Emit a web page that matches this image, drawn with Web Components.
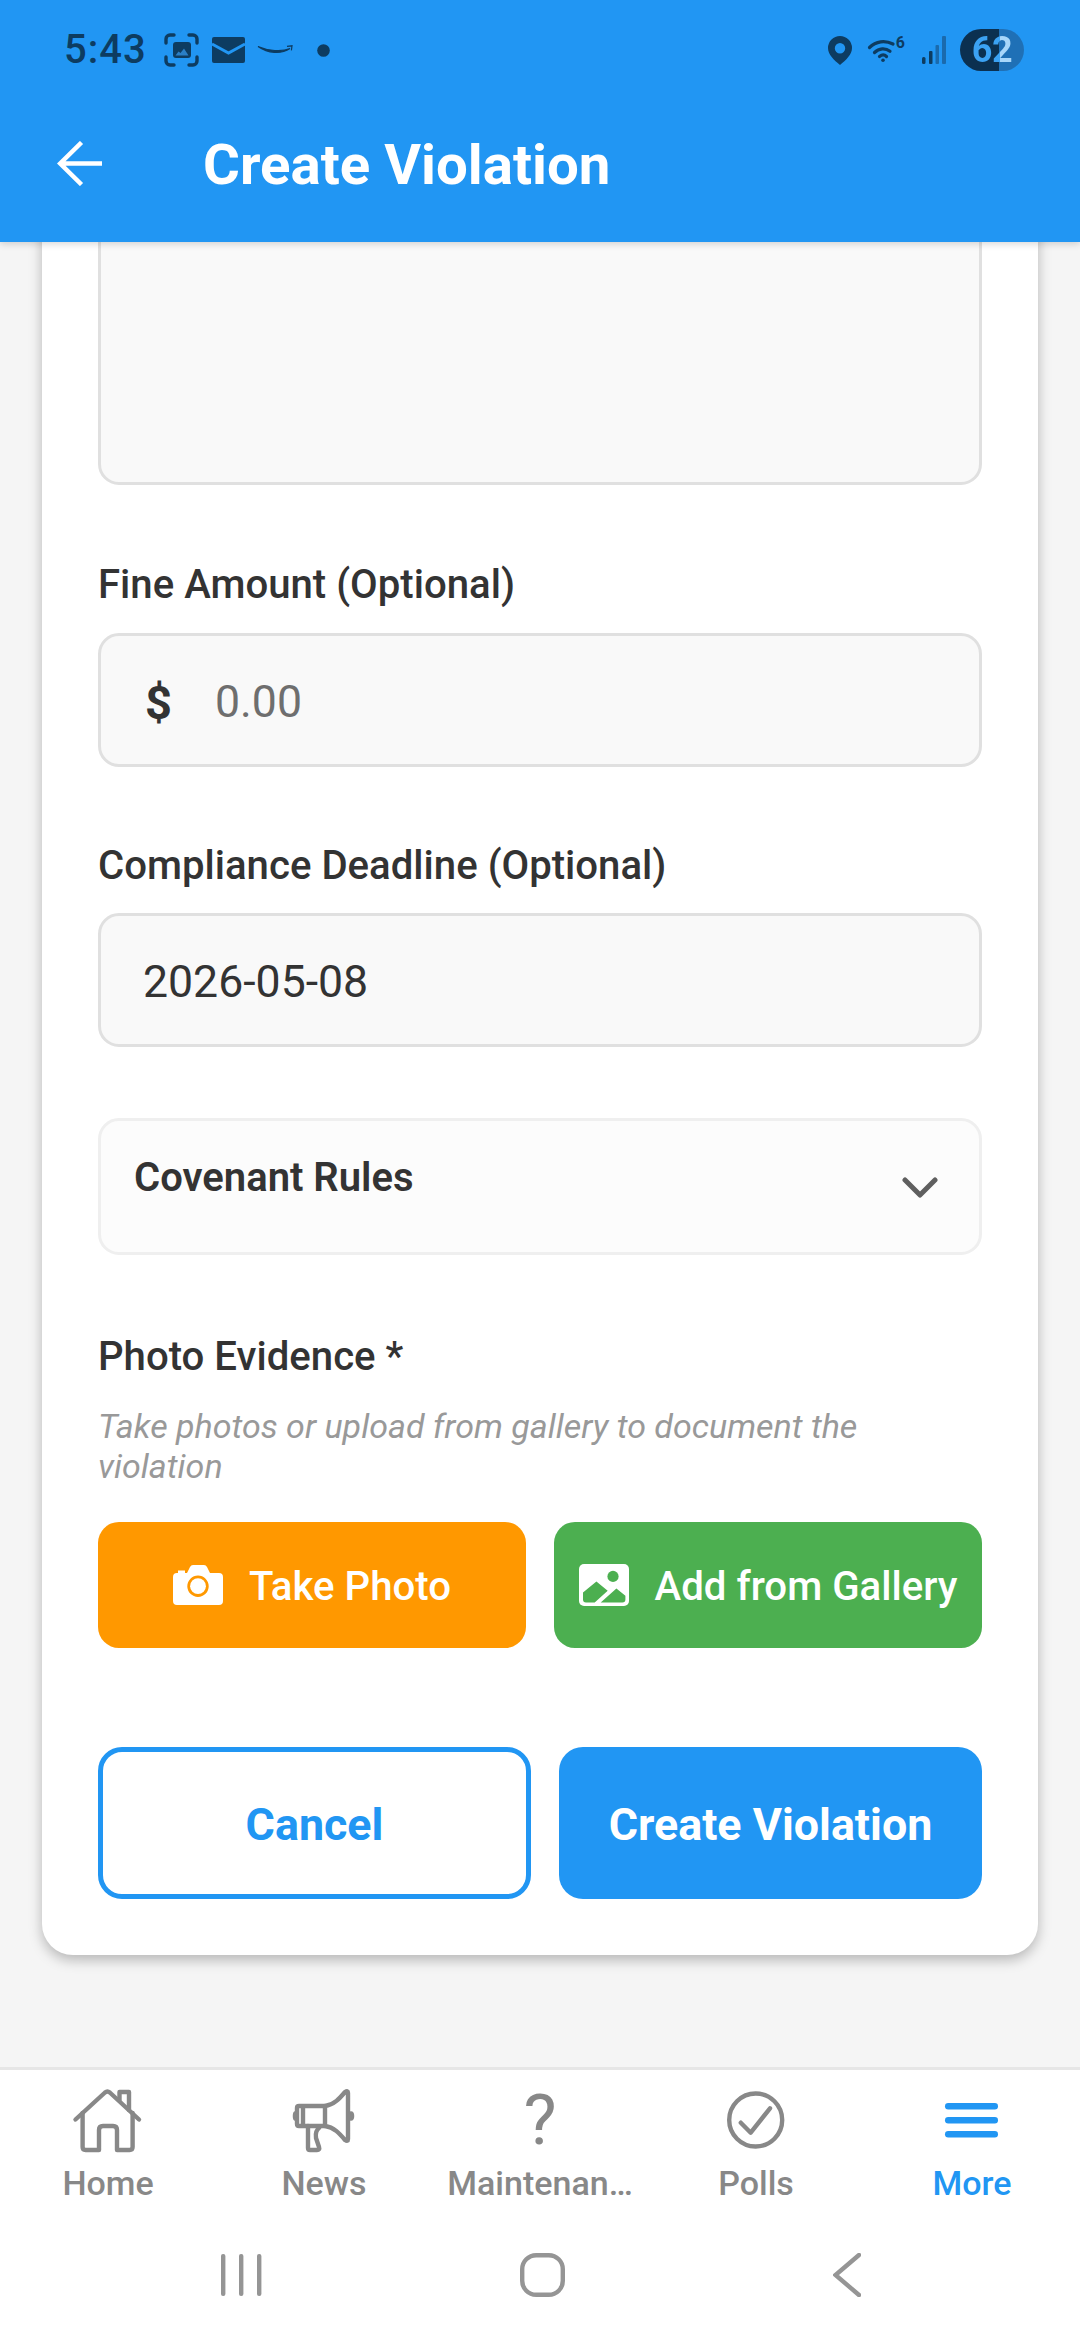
<!DOCTYPE html>
<html lang="en">
<head>
<meta charset="utf-8">
<title>Create Violation</title>
<style>
  html,body{margin:0;padding:0;background:#f5f5f5;font-family:Roboto,"Liberation Sans",sans-serif}
  body{width:1080px;height:2340px;overflow:hidden}
</style>
</head>
<body>
<app-screen>
  <app-header slot="header" title-text="Create Violation"></app-header>
  <form-card>
    <text-box kind="area"></text-box>
    <form-field label="Fine Amount (Optional)">
      <text-box prefix="$" placeholder="0.00"></text-box>
    </form-field>
    <form-field label="Compliance Deadline (Optional)">
      <text-box value="2026-05-08"></text-box>
    </form-field>
    <rules-accordion label="Covenant Rules"></rules-accordion>
    <photo-section label="Photo Evidence *" hint="Take photos or upload from gallery to document the violation">
      <action-button slot="actions" kind="camera" color="#FF9800">Take Photo</action-button>
      <action-button slot="actions" kind="gallery" color="#4CAF50">Add from Gallery</action-button>
    </photo-section>
    <form-actions>
      <submit-button variant="outline">Cancel</submit-button>
      <submit-button>Create Violation</submit-button>
    </form-actions>
  </form-card>
  <tab-bar slot="tabs">
    <tab-item label="Home" icon="home"></tab-item>
    <tab-item label="News" icon="news"></tab-item>
    <tab-item label="Maintenan…" icon="help"></tab-item>
    <tab-item label="Polls" icon="polls"></tab-item>
    <tab-item label="More" icon="more" active></tab-item>
  </tab-bar>
  <system-nav slot="tabs"></system-nav>
</app-screen>

<script>
const shadow = (el, html) => { el.attachShadow({mode:'open'}).innerHTML = html; };
const esc = s => String(s ?? '').replace(/&/g,'&amp;').replace(/</g,'&lt;').replace(/"/g,'&quot;');

customElements.define('app-screen', class extends HTMLElement {
  connectedCallback(){ shadow(this, `<style>
    :host{display:flex;flex-direction:column;width:1080px;height:2340px;overflow:hidden;background:#f5f5f5}
    .main{flex:1;min-height:0;display:flex;flex-direction:column;justify-content:flex-end;overflow:hidden;padding:0 42px 112px}
    .top{position:relative;z-index:2;flex:none}
    .tabs{flex:none;background:#fff;border-top:3px solid #e6e6e6;height:270px;display:flex;flex-direction:column}
  </style>
  <div class="top"><slot name="header"></slot></div>
  <div class="main"><slot></slot></div>
  <div class="tabs"><slot name="tabs"></slot></div>`); }
});

customElements.define('status-bar', class extends HTMLElement {
  connectedCallback(){ const c='#0d3c61'; shadow(this, `<style>
    :host{display:flex;align-items:center;height:100px;padding:0 56px 0 64px;box-sizing:border-box;color:${c}}
    .time{font:500 40px/1 Roboto,sans-serif;letter-spacing:1px;width:81px;margin-right:19px;white-space:nowrap}
    svg{display:block;flex:none;overflow:visible}
    .spacer{flex:1}
    .batt{position:relative;width:64px;height:42px;border-radius:21px;overflow:hidden;margin-left:11px;
      background:linear-gradient(90deg,#0b3050 0 39px,#1f70b6 39px);display:flex;align-items:center;justify-content:center}
    .batt span{font:700 36px/1 Roboto,sans-serif;letter-spacing:-.5px;color:transparent;
      background:linear-gradient(90deg,#3ba2f3 0 28px,#a7d6fa 28px);-webkit-background-clip:text;background-clip:text}
    .wifi{position:relative;width:37px;height:24px;margin-right:17px;flex:none}
    .wifi b{position:absolute;right:0;top:-4px;font:700 16px/18px Roboto,sans-serif;color:${c}}
  </style>
  <span class="time">5:43</span>
  <svg width="35" height="34" viewBox="0 0 35 34" fill="none" stroke="${c}" stroke-width="3.4" stroke-linecap="round" style="margin-right:13px">
    <path d="M2 10V6a4 4 0 0 1 4-4h4M25 2h4a4 4 0 0 1 4 4v4M33 24v4a4 4 0 0 1-4 4h-4M10 32H6a4 4 0 0 1-4-4v-4"/>
    <rect x="9" y="9" width="18" height="16" rx="3" fill="${c}" stroke="none"/>
    <path d="M11.500 22.500l3-4 2 1.500 3.500-4.500 4.500 7z" fill="#2a7fc6" stroke="none"/>
  </svg>
  <svg width="33" height="26" viewBox="0 0 33 26" style="margin-right:13px">
    <rect width="33" height="26" rx="2" fill="${c}"/>
    <path d="M0 7l16.500 9L33 7" fill="none" stroke="#2196F3" stroke-width="3"/>
  </svg>
  <svg width="35" height="12" viewBox="0 0 35 12" fill="none" style="margin-right:24px">
    <path d="M0 2.500C10 9.500 23 10.500 32 4.500C24 8 10 7 0 2.500z" fill="${c}" stroke="${c}" stroke-width="1.200"/>
    <path d="M29 2.400l5-.6-.6 4.600" stroke="${c}" stroke-width="1.200"/>
  </svg>
  <svg width="13" height="13" viewBox="0 0 13 13"><circle cx="6.500" cy="6.500" r="6.300" fill="${c}"/></svg>
  <span class="spacer"></span>
  <svg width="24" height="29" viewBox="0 0 24 29" style="margin-right:16px">
    <path fill-rule="evenodd" d="M12 0a12 12 0 0 1 12 12c0 6.500-6 12-12 17C6 24 0 18.500 0 12A12 12 0 0 1 12 0zm0 7a5.200 5.200 0 1 0 0 10.400A5.200 5.200 0 0 0 12 7z" fill="${c}"/>
  </svg>
  <span class="wifi">
    <svg width="37" height="24" viewBox="0 0 37 24" fill="none" stroke="${c}" stroke-width="3.200" stroke-linecap="round">
      <path d="M1.500 9.500C8 3 17 2 25 6M6.500 14.500c4.500-4.500 11-4.800 15.500-1.200M11.500 18.500c2.500-2 5-2 7 0"/>
      <circle cx="15" cy="22.300" r="1.800" fill="${c}" stroke="none"/>
    </svg>
    <b>6</b>
  </span>
  <svg width="27" height="28" viewBox="0 0 27 28">
    <rect x="0" y="21" width="3.500" height="7" rx="1.500" fill="${c}"/>
    <rect x="7" y="15" width="3.500" height="13" rx="1" fill="${c}"/>
    <rect x="13.500" y="9" width="3.500" height="19" rx="1" fill="#1a6aad"/>
    <rect x="20" y="0" width="4" height="28" rx="1" fill="#1a6aad"/>
  </svg>
  <div class="batt"><span>62</span></div>`); }
});

customElements.define('app-header', class extends HTMLElement {
  connectedCallback(){ shadow(this, `<style>
    :host{display:block;background:#2196F3;height:242px;box-shadow:0 2px 7px rgba(0,0,0,.16)}
    .bar{display:flex;align-items:center;height:130px;padding-left:57px;box-sizing:border-box}
    svg{display:block;flex:none;margin-right:101px;margin-top:-4px}
    h1{margin:0;font:700 56.400px/1 Roboto,sans-serif;color:#fff;white-space:nowrap}
  </style>
  <status-bar></status-bar>
  <div class="bar">
    <svg width="45" height="45" viewBox="0 0 45 45" fill="none" stroke="#fff" stroke-width="4.500">
      <path d="M45 22.500H3M24.500 1.500L3.200 22.500l21.300 21"/>
    </svg>
    <h1>${esc(this.getAttribute('title-text'))}</h1>
  </div>`); }
});

customElements.define('form-card', class extends HTMLElement {
  connectedCallback(){ shadow(this, `<style>
    :host{display:flex;flex-direction:column;flex:none;background:#fff;border-radius:0 0 31px 31px;padding:0 56px 56px;
      box-shadow:0 5px 13px rgba(0,0,0,.26)}
  </style><slot></slot>`); }
});

customElements.define('form-field', class extends HTMLElement {
  connectedCallback(){ shadow(this, `<style>
    :host{display:block;margin-top:72px}
    :host(:nth-child(2)){margin-top:75px}
    label{display:block;font:500 40.150px/50px Roboto,sans-serif;color:#333;padding-top:2px;margin-bottom:22px;white-space:nowrap}
    :host(:nth-child(2)) label{padding-top:0;margin-bottom:23px}
  </style><label>${esc(this.getAttribute('label'))}</label><slot></slot>`); }
});

customElements.define('text-box', class extends HTMLElement {
  connectedCallback(){
    const area = this.getAttribute('kind')==='area';
    const pre = this.getAttribute('prefix');
    const val = this.getAttribute('value');
    const ph = this.getAttribute('placeholder');
    shadow(this, `<style>
    :host{display:flex;align-items:center;box-sizing:border-box;height:${area?'320px':'134px'};background:#f9f9f9;
      border:3px solid #e0e0e0;border-radius:21px;padding:5px 42px 0}
    .pre{font:700 47px/1 Roboto,sans-serif;color:#333;width:70px;flex:none;margin-left:2px}
    .val{font:400 44.600px/1 Roboto,sans-serif;color:#333}
    .ph{font:400 44.600px/1 Roboto,sans-serif;color:#6e6e6e}
  </style>${pre?`<span class="pre">${esc(pre)}</span>`:''}${val?`<span class="val">${esc(val)}</span>`:''}${ph?`<span class="ph">${esc(ph)}</span>`:''}`);
  }
});

customElements.define('rules-accordion', class extends HTMLElement {
  connectedCallback(){ shadow(this, `<style>
    :host{display:flex;align-items:center;justify-content:space-between;box-sizing:border-box;height:137px;margin-top:71px;
      background:#fcfcfc;border:3px solid #efefef;border-radius:21px;padding:0 41px 18px 33px}
    span{font:600 40px/1 Roboto,sans-serif;color:#333}
    svg{display:block;margin-top:20px}
  </style><span>${esc(this.getAttribute('label'))}</span>
  <svg width="36" height="22" viewBox="0 0 36 22" fill="none" stroke="#5f5f5f" stroke-width="5" stroke-linecap="round" stroke-linejoin="round"><path d="M3 3l15 15L33 3"/></svg>`); }
});

customElements.define('photo-section', class extends HTMLElement {
  connectedCallback(){ shadow(this, `<style>
    :host{display:block;margin-top:74px}
    label{display:block;font:500 40.150px/50px Roboto,sans-serif;color:#333;padding-top:3px}
    p{margin:24px 0 36px;font:italic 400 34px/40px Roboto,sans-serif;color:#999}
    .row{display:grid;grid-template-columns:1fr 1fr;gap:28px}
  </style><label>${esc(this.getAttribute('label'))}</label><p>${esc(this.getAttribute('hint'))}</p><div class="row"><slot name="actions"></slot></div>`); }
});

customElements.define('action-button', class extends HTMLElement {
  connectedCallback(){
    const icons = {
      camera:`<svg width="50" height="40" viewBox="0 0 50 40"><path fill="#fff" fill-rule="evenodd" d="M4 8h1V5.500h7V8h2l3-6q1-2 3-2h11q2 0 3 2l3 6h9q4 0 4 4v24q0 4-4 4H4q-4 0-4-4V12q0-4 4-4zM25 10.500a10.700 10.700 0 1 0 0 21.400a10.700 10.700 0 0 0 0-21.400z"/><circle cx="25" cy="21.200" r="7.900" fill="#fff"/></svg>`,
      gallery:`<svg width="50" height="42" viewBox="0 0 50 42"><rect width="50" height="42" rx="5" fill="#fff"/><circle cx="34" cy="12.400" r="5.600" fill="#4CAF50"/><path fill="#4CAF50" d="M4 28.400L17.400 17.400L28.700 26.700L15.700 38.400H7Q4 38.400 4 35.400zM21.700 38.400L37.400 24.400L46.400 31.700V35.400Q46.400 38.400 43.400 38.400z"/></svg>`
    };
    shadow(this, `<style>
    :host{display:flex;align-items:center;justify-content:center;gap:26px;height:126px;border-radius:21px;background:${this.getAttribute('color')};color:#fff;
      font:500 40.200px/1 Roboto,sans-serif;white-space:nowrap;padding:0}
    svg{display:block;flex:none}
    span{padding-top:5px}
  </style>${icons[this.getAttribute('kind')]}<span><slot></slot></span>`);
  }
});

customElements.define('form-actions', class extends HTMLElement {
  connectedCallback(){ shadow(this, `<style>
    :host{display:grid;grid-template-columns:433px 423px;gap:28px;margin-top:99px}
  </style><slot></slot>`); }
});

customElements.define('submit-button', class extends HTMLElement {
  connectedCallback(){ const o=this.getAttribute('variant')==='outline'; shadow(this, `<style>
    :host{display:flex;align-items:center;justify-content:center;box-sizing:border-box;height:152px;border-radius:24px;padding-top:4px;
      font:700 44.800px/1 Roboto,sans-serif;white-space:nowrap;
      background:${o?'#fff':'#2196F3'};color:${o?'#2196F3':'#fff'};border:${o?'5px solid #2196F3':'none'}}
  </style><slot></slot>`); }
});

customElements.define('tab-bar', class extends HTMLElement {
  connectedCallback(){ shadow(this, `<style>
    :host{display:grid;grid-template-columns:repeat(5,216px);height:162px}
  </style><slot></slot>`); }
});

customElements.define('tab-item', class extends HTMLElement {
  connectedCallback(){
    const active = this.hasAttribute('active');
    const g='#888888', b='#2196F3';
    const icons = {
      home:`<svg width="72" height="72" viewBox="0 0 72 72" fill="none" stroke="${g}" stroke-width="4.400" stroke-linecap="round" stroke-linejoin="round">
        <path d="M3.500 35.500L33 8.500q2.400-2 4.800 0L67 35.500"/>
        <path d="M10.600 29V63q0 3 3 3H27V46q0-4 4-4H41q4 0 4 4V66H57.600q3 0 3-3V29"/>
        <path d="M47.500 16V8H57V26"/></svg>`,
      news:`<svg width="72" height="72" viewBox="0 0 72 72" fill="none" stroke="${g}" stroke-width="4.400" stroke-linecap="round" stroke-linejoin="round">
        <path d="M11 22H37V42H11q-2 0-2-2V24q0-2 2-2zM15 22V42"/>
        <path d="M37 22C46 21 52 14 57 8q3-2 3 1V55q0 3-3 1C52 50 46 43 37 42"/>
        <path d="M20 42V64q0 2 2 2H29q3 0 2-3L28 54q-1-7 3-10"/>
        <ellipse cx="63" cy="32" rx="2.500" ry="4" fill="${g}" stroke-width="1.500"/>
        <ellipse cx="7" cy="32" rx="1.500" ry="4" fill="${g}" stroke-width="1.500"/></svg>`,
      help:`<span class="q">?</span>`,
      polls:`<svg width="72" height="72" viewBox="0 0 72 72" fill="none" stroke="${g}" stroke-width="4.400" stroke-linecap="round" stroke-linejoin="round">
        <circle cx="35.700" cy="36" r="26.500"/><path d="M20.800 38.700L30.700 48.700L50 24.300"/></svg>`,
      more:`<svg width="72" height="72" viewBox="0 0 72 72" fill="${b}">
        <rect x="9" y="19" width="53" height="6.500" rx="3.200"/><rect x="9" y="33" width="53" height="6.500" rx="3.200"/><rect x="9" y="47" width="53" height="6.500" rx="3.200"/></svg>`
    };
    shadow(this, `<style>
    :host{display:flex;flex-direction:column;align-items:center;padding-top:14px;box-sizing:border-box;min-width:0}
    .ic{width:72px;height:72px;display:flex;align-items:center;justify-content:center}
    svg{display:block;flex:none}
    .q{font:400 70px/72px Roboto,sans-serif;color:${g}}
    .l{margin-top:7px;font:500 34px/40px Roboto,sans-serif;color:${active?b:g};white-space:nowrap}
  </style><div class="ic">${icons[this.getAttribute('icon')]}</div><div class="l">${esc(this.getAttribute('label'))}</div>`);
  }
});

customElements.define('system-nav', class extends HTMLElement {
  connectedCallback(){ const c='#959595'; shadow(this, `<style>
    :host{display:block;flex:1;min-height:0}
    .row{display:grid;grid-template-columns:1fr 1fr 1fr;height:44px;margin-top:21px}
    .c{display:flex;justify-content:flex-start}
    svg{display:block}
  </style><div class="row">
    <div class="c" style="padding-left:220px"><svg width="42" height="44" viewBox="0 0 42 44" fill="${c}"><rect x="1" y="1" width="4.400" height="42" rx="2"/><rect x="19" y="1" width="4.400" height="42" rx="2"/><rect x="37" y="1" width="4.400" height="42" rx="2"/></svg></div>
    <div class="c" style="padding-left:160px"><svg width="45" height="44" viewBox="0 0 45 44" fill="none" stroke="${c}" stroke-width="4.400"><rect x="2.200" y="2.200" width="40.600" height="39.600" rx="14"/></svg></div>
    <div class="c" style="padding-left:113px"><svg width="28" height="44" viewBox="0 0 28 44" fill="none" stroke="${c}" stroke-width="4.400" stroke-linecap="round"><path d="M26 2L2.500 22L26 42"/></svg></div>
  </div>`); }
});
</script>
</body>
</html>
